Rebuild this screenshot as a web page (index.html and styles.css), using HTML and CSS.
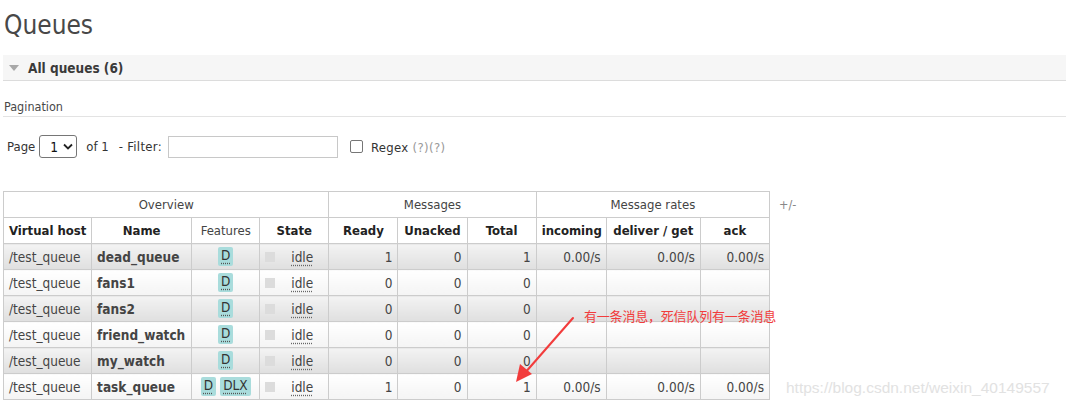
FILE: index.html
```html
<!DOCTYPE html>
<html lang="en">
<head>
<meta charset="utf-8">
<title>Queues</title>
<link rel="stylesheet" href="styles.css">
</head>
<body>
<div class="page">
  <h1 class="title">Queues</h1>
  <div class="section">
    <h2 class="section-head"><span class="tri"></span>All queues (6)</h2>
    <div class="section-body">
      <h3 class="subhead">Pagination</h3>
      <div class="filter">
        <span>Page</span>
        <span class="select"><span class="sel-val">1</span><svg class="chev" width="10" height="7" viewBox="0 0 10 7"><path d="M1 1.5 L5 5.5 L9 1.5" fill="none" stroke="#222" stroke-width="1.8"/></svg></span>
        <span class="of">of 1</span>
        <span class="flabel">- Filter:</span>
        <span class="textbox"></span>
        <span class="checkbox"></span>
        <span class="regex">Regex</span>
        <span class="help">(?)(?)</span>
      </div>
      <div class="table-row">
        <table class="list">
          <colgroup>
            <col class="c-vh"><col class="c-name"><col class="c-feat"><col class="c-state"><col class="c-num"><col class="c-num"><col class="c-num"><col class="c-inc"><col class="c-del"><col class="c-ack">
          </colgroup>
          <thead>
            <tr class="group">
              <th colspan="4">Overview</th>
              <th colspan="3">Messages</th>
              <th colspan="3">Message rates</th>
            </tr>
            <tr class="cols">
              <th>Virtual host</th><th>Name</th><th class="plain">Features</th><th>State</th>
              <th>Ready</th><th>Unacked</th><th>Total</th>
              <th>incoming</th><th>deliver / get</th><th>ack</th>
            </tr>
          </thead>
          <tbody>
            <tr class="alt1">
              <td class="vh">/test_queue</td><td class="name">dead_queue</td>
              <td class="feat"><span class="badge">D</span></td>
              <td class="state"><span class="sq"></span><span class="idle">idle</span></td>
              <td class="num">1</td><td class="num">0</td><td class="num">1</td>
              <td class="num">0.00/s</td><td class="num">0.00/s</td><td class="num">0.00/s</td>
            </tr>
            <tr class="alt2">
              <td class="vh">/test_queue</td><td class="name">fans1</td>
              <td class="feat"><span class="badge">D</span></td>
              <td class="state"><span class="sq"></span><span class="idle">idle</span></td>
              <td class="num">0</td><td class="num">0</td><td class="num">0</td>
              <td class="num"></td><td class="num"></td><td class="num"></td>
            </tr>
            <tr class="alt1">
              <td class="vh">/test_queue</td><td class="name">fans2</td>
              <td class="feat"><span class="badge">D</span></td>
              <td class="state"><span class="sq"></span><span class="idle">idle</span></td>
              <td class="num">0</td><td class="num">0</td><td class="num">0</td>
              <td class="num"></td><td class="num"></td><td class="num"></td>
            </tr>
            <tr class="alt2">
              <td class="vh">/test_queue</td><td class="name">friend_watch</td>
              <td class="feat"><span class="badge">D</span></td>
              <td class="state"><span class="sq"></span><span class="idle">idle</span></td>
              <td class="num">0</td><td class="num">0</td><td class="num">0</td>
              <td class="num"></td><td class="num"></td><td class="num"></td>
            </tr>
            <tr class="alt1">
              <td class="vh">/test_queue</td><td class="name">my_watch</td>
              <td class="feat"><span class="badge">D</span></td>
              <td class="state"><span class="sq"></span><span class="idle">idle</span></td>
              <td class="num">0</td><td class="num">0</td><td class="num">0</td>
              <td class="num"></td><td class="num"></td><td class="num"></td>
            </tr>
            <tr class="alt2">
              <td class="vh">/test_queue</td><td class="name">task_queue</td>
              <td class="feat"><span class="badge">D</span><span class="badge">DLX</span></td>
              <td class="state"><span class="sq"></span><span class="idle">idle</span></td>
              <td class="num">1</td><td class="num">0</td><td class="num">1</td>
              <td class="num">0.00/s</td><td class="num">0.00/s</td><td class="num">0.00/s</td>
            </tr>
          </tbody>
        </table>
        <span class="plusminus">+/-</span>
      </div>
    </div>
  </div>
  <div class="note">有一条消息，死信队列有一条消息</div>
  <svg class="arrow" width="70" height="70" viewBox="0 0 70 70">
    <path d="M61 2 L12 58" stroke="#f23c3c" stroke-width="2" fill="none" stroke-linecap="round"/>
    <path d="M4 66 L8 48 L20 58 Z" fill="#f23c3c"/>
  </svg>
  <div class="watermark">https://blog.csdn.net/weixin_40149557</div>
</div>
</body>
</html>
```

FILE: styles.css
```css
html, body {
  margin: 0;
  padding: 0;
  background: #fff;
}
body {
  font-family: "DejaVu Sans Condensed", "DejaVu Sans", sans-serif;
  font-stretch: condensed;
  color: #444;
}
.page {
  position: relative;
  padding: 0 0 0 3px;
  height: 407px;
  overflow: hidden;
}
.title {
  margin: 0;
  padding: 10px 0 0 1px;
  height: 55px;
  box-sizing: border-box;
  font-size: 26px;
  font-weight: normal;
  line-height: 30px;
  color: #484848;
}
.section-head {
  margin: 0;
  height: 26px;
  box-sizing: border-box;
  background: #f6f6f6;
  border-bottom: 1px solid #dcdcdc;
  display: flex;
  align-items: center;
  padding-left: 6px;
  font-size: 13.5px;
  font-weight: bold;
  color: #3a3a3a;
}
.tri {
  width: 0;
  height: 0;
  border-left: 5px solid transparent;
  border-right: 5px solid transparent;
  border-top: 6px solid #a8a8a8;
  margin-right: 9px;
  margin-top: 1px;
}
.subhead {
  margin: 15px 0 0 0;
  padding: 2px 0 0 1px;
  height: 21px;
  box-sizing: border-box;
  border-bottom: 1px solid #e3e3e3;
  font-size: 12.5px;
  font-weight: normal;
  line-height: 18px;
  color: #484848;
}
.filter {
  display: flex;
  align-items: center;
  height: 23px;
  margin-top: 18px;
  padding-left: 4px;
  font-size: 13px;
  color: #333;
}
.select {
  display: inline-flex;
  align-items: center;
  justify-content: space-between;
  width: 38px;
  height: 23px;
  box-sizing: border-box;
  border: 1px solid #767676;
  border-radius: 3px;
  margin-left: 4px;
  padding: 0 3px 0 10px;
  font-size: 13.5px;
  color: #111;
}
.of {
  margin-left: 9px;
}
.flabel {
  margin-left: 10px;
  letter-spacing: 0.3px;
}
.textbox {
  width: 170px;
  height: 22px;
  box-sizing: border-box;
  border: 1px solid #c8c8c8;
  margin-left: 6px;
}
.checkbox {
  width: 13px;
  height: 13px;
  box-sizing: border-box;
  border: 1px solid #767676;
  border-radius: 2px;
  margin-left: 12px;
}
.regex {
  margin-left: 8px;
  margin-top: 2px;
  letter-spacing: 0.3px;
}
.help {
  margin-left: 4px;
  margin-top: 2px;
  color: #999;
  letter-spacing: 0.4px;
}
.table-row {
  display: flex;
  align-items: flex-start;
  margin-top: 33px;
}
table.list {
  border-collapse: collapse;
  table-layout: fixed;
  width: 767px;
}
col.c-vh { width: 88px; }
col.c-name { width: 100px; }
col.c-feat { width: 68px; }
col.c-state { width: 69px; }
col.c-num { width: 69px; }
col.c-inc { width: 70px; }
col.c-del { width: 94px; }
col.c-ack { width: 69px; }
table.list th,
table.list td {
  border: 1px solid #cccccc;
  height: 26px;
  box-sizing: border-box;
  padding: 0 5px;
  white-space: nowrap;
  overflow: hidden;
}
table.list th {
  font-size: 13px;
  text-align: center;
  font-weight: bold;
  color: #222;
  background: #fff;
}
table.list tr.group th {
  font-weight: normal;
  color: #444;
}
table.list th.plain {
  font-weight: normal;
  color: #444;
}
table.list td {
  font-size: 13.5px;
  color: #444;
}
tr.alt1 > td {
  background: linear-gradient(to bottom, #f3f3f3, #dfdfdf);
}
tr.alt2 > td {
  background: linear-gradient(to bottom, #ffffff, #f4f4f4);
}
td.vh {
  color: #555;
}
td.name {
  font-weight: bold;
  color: #1e1e1e;
}
td.num {
  text-align: right;
}
td.feat {
  text-align: center;
  font-size: 0;
}
.badge {
  display: inline-block;
  background: #a9dcdc;
  border-radius: 2px;
  padding: 0 3px;
  height: 19px;
  line-height: 17px;
  font-size: 13.5px;
  color: #333;
  vertical-align: middle;
  text-decoration: underline dotted #555;
  text-underline-offset: 3px;
  margin: 0 2px;
}
td.state {
  padding-left: 5px;
}
.sq {
  display: inline-block;
  width: 10px;
  height: 10px;
  background: #dcdcdc;
  vertical-align: middle;
  margin-right: 16px;
}
.idle {
  vertical-align: middle;
  text-decoration: underline dotted #666;
  text-underline-offset: 3px;
}
.plusminus {
  margin: 6px 0 0 9px;
  font-size: 12.5px;
  color: #888;
}
.note {
  position: absolute;
  left: 584px;
  top: 307px;
  font-family: "Noto Sans CJK SC", sans-serif;
  font-size: 13px;
  line-height: 18px;
  color: #f23c3c;
  letter-spacing: -0.2px;
}
.arrow {
  position: absolute;
  left: 512px;
  top: 316px;
}
.watermark {
  position: absolute;
  left: 786px;
  top: 378px;
  font-family: "Liberation Sans", Arial, sans-serif;
  font-size: 15.5px;
  line-height: 20px;
  color: #e2e2e2;
}
```
